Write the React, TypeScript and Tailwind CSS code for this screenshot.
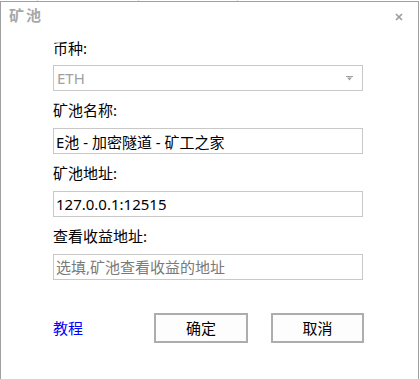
const font = { fontFamily: '"Noto Sans", "Noto Sans CJK SC", sans-serif' }

function Field({ label, value, placeholder }: { label: string; value?: string; placeholder?: string }) {
  return (
    <div className="flex flex-col">
      <label className="h-[20px] text-[15px] leading-[20px] text-black">{label}</label>
      <input
        readOnly
        value={value ?? ""}
        placeholder={placeholder}
        className="mt-[8px] h-[26px] w-[310px] border border-[#c8c8c8] bg-white px-[2px] text-[15px] text-black outline-none placeholder:text-[#7a7a7a]"
        style={font}
      />
    </div>
  )
}

export default function App() {
  return (
    <div className="flex h-[379px] w-[420px] flex-col overflow-hidden bg-white" style={font}>
      <div className="flex h-[1px]">
        <span className="ml-[37px] w-[1px] bg-[#d8d8d8]" />
        <span className="ml-[100px] w-[1px] bg-[#d8d8d8]" />
        <span className="ml-[98px] w-[1px] bg-[#d8d8d8]" />
      </div>
      <div className="flex w-[419px] flex-1 flex-col border-x border-t border-[#a0a0a0]">
        <div className="flex items-start justify-between pl-[8px] pr-[15px] pt-[3px]">
          <span className="text-[15px] font-bold leading-[20px] tracking-[2px] text-[#a8a8a8]">矿池</span>
          <svg width="8" height="8" viewBox="0 0 8 8" className="mt-[8px]">
            <path d="M1 1 L7 7 M7 1 L1 7" stroke="#9a9a9a" strokeWidth="1.6" />
          </svg>
        </div>

        <div className="flex flex-col gap-[9px] pl-[52px] pt-[13px]">
          <div className="flex flex-col">
            <label className="h-[20px] text-[15px] leading-[20px] text-black">币种:</label>
            <div className="mt-[7px] flex h-[26px] w-[310px] items-center justify-between border border-[#c8c8c8] bg-white pl-[3px] pr-[9px]">
              <span className="text-[15px] text-[#a0a0a0]">ETH</span>
              <svg width="7" height="5" viewBox="0 0 7 5">
                <path d="M0 0.5 H7" stroke="#a0a0a0" strokeWidth="1" />
                <path d="M1 1.5 H6 L3.5 4.5 Z" fill="#a0a0a0" />
              </svg>
            </div>
          </div>
          <Field label="矿池名称:" value="E池 - 加密隧道 - 矿工之家" />
          <Field label="矿池地址:" value="127.0.0.1:12515" />
          <Field label="查看收益地址:" placeholder="选填,矿池查看收益的地址" />
        </div>

        <div className="mt-[33px] flex items-center pl-[52px]">
          <a className="w-[101px] text-[15px] leading-[20px] text-[#0000ff]">教程</a>
          <button className="h-[30px] w-[94px] border-2 border-[#adadad] bg-[#fdfdfd] text-[15px] text-black">
            确定
          </button>
          <button className="ml-[23px] h-[30px] w-[93px] border-2 border-[#adadad] bg-[#fdfdfd] text-[15px] text-black">
            取消
          </button>
        </div>
      </div>
    </div>
  )
}
